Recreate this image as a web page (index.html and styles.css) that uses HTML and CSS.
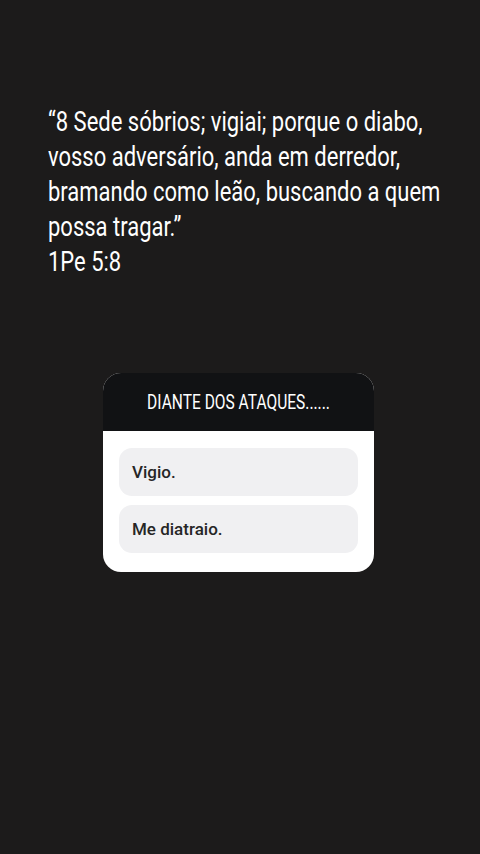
FILE: index.html
```html
<!DOCTYPE html>
<html lang="pt">
<head>
<meta charset="utf-8">
<link rel="stylesheet" href="styles.css">
</head>
<body>
<main class="story">
  <p class="quote">“8 Sede sóbrios; vigiai; porque o diabo,<br>vosso adversário, anda em derredor,<br>bramando como leão, buscando a quem<br>possa tragar.”<br>1Pe 5:8</p>
  <section class="poll">
    <header class="poll-head"><span class="head-text">DIANTE DOS ATAQUES......</span></header>
    <div class="poll-body">
      <div class="option">Vigio.</div>
      <div class="option">Me diatraio.</div>
    </div>
  </section>
</main>
</body>
</html>
```
FILE: styles.css
```css
html, body {
  margin: 0;
  padding: 0;
  background: #1c1b1b;
}
.story {
  width: 480px;
  height: 854px;
  box-sizing: border-box;
  padding: 104px 0 0 48px;
  display: flex;
  flex-direction: column;
}
.quote {
  margin: 0;
  width: 410px;
  color: #ffffff;
  font-family: Roboto, sans-serif;
  font-size: 28px;
  line-height: 35px;
  white-space: nowrap;
  transform: scaleX(0.785);
  transform-origin: left top;
}
.poll {
  margin: 94px 0 0 55px;
  width: 271px;
  border-radius: 18px;
  overflow: hidden;
  background: #fff;
}
.poll-head {
  height: 58px;
  background: #111214;
  color: #fff;
  display: flex;
  align-items: center;
  justify-content: center;
  font-family: Roboto, sans-serif;
  font-size: 21px;
}
.head-text {
  display: inline-block;
  white-space: nowrap;
  transform: scaleX(0.74);
}
.poll-body {
  padding: 17px 16px 19px 16px;
  display: flex;
  flex-direction: column;
  gap: 9px;
}
.option {
  height: 48px;
  border-radius: 13px;
  background: #f0f0f2;
  display: flex;
  align-items: center;
  padding-left: 13px;
  font-family: Roboto, sans-serif;
  font-weight: 500;
  font-size: 17px;
  color: #262626;
}
```
